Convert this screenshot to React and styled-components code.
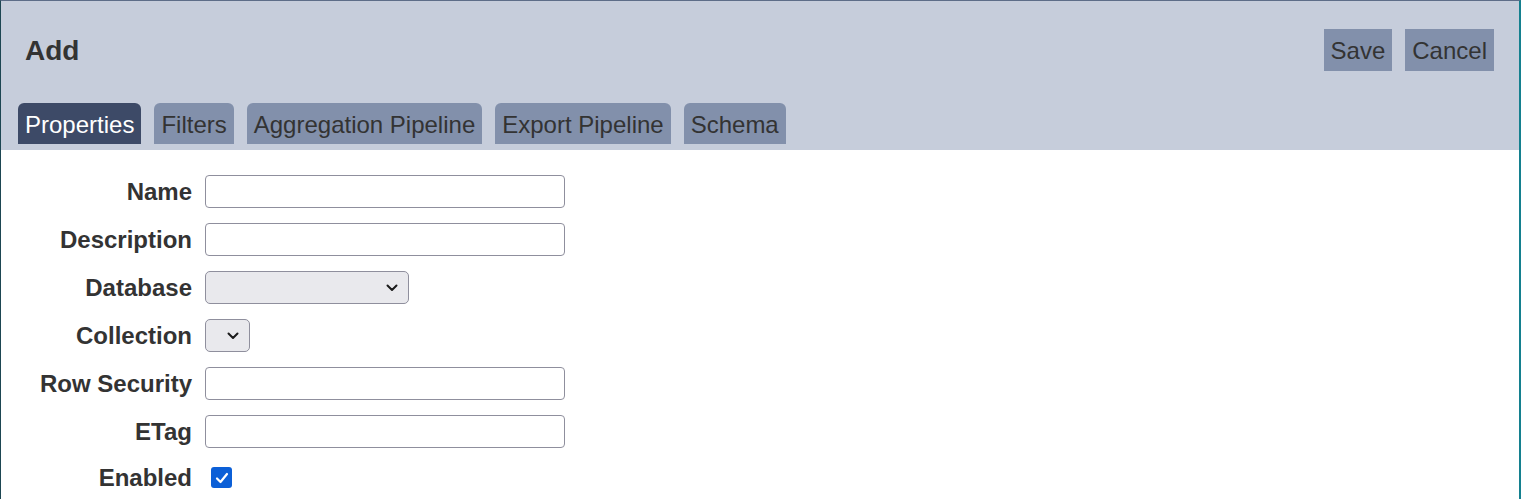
import React, { useState } from "react";
import styled, { createGlobalStyle } from "styled-components";

const GlobalStyle = createGlobalStyle`
  html, body {
    margin: 0;
    padding: 0;
    background: #ffffff;
  }
  body {
    font-family: "Liberation Sans", Arial, sans-serif;
    color: #333333;
  }
`;

const tabs = ["Properties", "Filters", "Aggregation Pipeline", "Export Pipeline", "Schema"];

const Window = styled.div`
  box-sizing: border-box;
  min-height: 100vh;
  border-top: 1px solid #5d6d88;
  border-left: 1px solid #1d4652;
  border-right: 2px solid #14808f;
  background: #ffffff;
`;

const Header = styled.div`
  background: #c6cddb;
  padding: 28px 25px 6px 17px;
`;

const TopRow = styled.div`
  display: flex;
  align-items: center;
  justify-content: space-between;
`;

const Title = styled.h1`
  margin: 0;
  padding: 2px 0 0 7px;
  font-size: 28px;
  font-weight: bold;
  color: #333333;
`;

const Actions = styled.div`
  display: flex;
  gap: 13px;
`;

const ActionButton = styled.button`
  font-family: inherit;
  font-size: 24px;
  line-height: 28px;
  color: #333333;
  background: #8290ab;
  border: none;
  border-radius: 0;
  padding: 8px 7px 6px;
  cursor: pointer;
`;

const TabBar = styled.div`
  display: flex;
  gap: 13px;
  margin-top: 32px;
`;

const Tab = styled.button`
  font-family: inherit;
  font-size: 24px;
  line-height: 28px;
  padding: 8px 7px 5px;
  border: none;
  border-radius: 6px 6px 0 0;
  background: ${(p) => (p.$active ? "#3d4a67" : "#8290ab")};
  color: ${(p) => (p.$active ? "#ffffff" : "#333333")};
  cursor: pointer;
`;

const Form = styled.div`
  display: grid;
  grid-template-columns: 191px auto;
  column-gap: 13px;
  row-gap: 15px;
  justify-content: start;
  align-items: center;
  padding-top: 25px;
`;

const Label = styled.label`
  text-align: right;
  font-size: 24px;
  font-weight: bold;
  color: #333333;
`;

const TextInput = styled.input`
  box-sizing: border-box;
  width: 360px;
  height: 33px;
  border: 1px solid #8f8f9d;
  border-radius: 4px;
  font-family: inherit;
  font-size: 20px;
  padding: 0 6px;
  background: #ffffff;
`;

const SelectWrap = styled.div`
  position: relative;
  width: ${(p) => p.$width}px;
  height: 33px;
`;

const Select = styled.select`
  box-sizing: border-box;
  width: 100%;
  height: 100%;
  appearance: none;
  -webkit-appearance: none;
  border: 1px solid #8f8f9d;
  border-radius: 5px;
  background: #e9e9ed;
  font-family: inherit;
  font-size: 20px;
  padding: 0 30px 0 6px;
`;

const Chevron = styled.svg`
  position: absolute;
  right: 11px;
  top: 13px;
  pointer-events: none;
`;

const CheckCell = styled.div`
  display: flex;
  align-items: center;
  padding-left: 6px;
  height: 29px;
`;

const CheckBox = styled.button`
  display: flex;
  align-items: center;
  justify-content: center;
  width: 21px;
  height: 21px;
  padding: 0;
  border: none;
  border-radius: 3px;
  background: ${(p) => (p.$checked ? "#0b5fd7" : "#ffffff")};
  box-shadow: ${(p) => (p.$checked ? "none" : "inset 0 0 0 1px #8f8f9d")};
  cursor: pointer;
`;

const ChevronIcon = () => (
  <Chevron width="12" height="8" viewBox="0 0 12 8">
    <path d="M1.5 1.5 L6 6 L10.5 1.5" fill="none" stroke="#1b1b1b" strokeWidth="2" strokeLinecap="round" strokeLinejoin="round" />
  </Chevron>
);

const Field = ({ label, children }) => (
  <>
    <Label>{label}</Label>
    <div>{children}</div>
  </>
);

export default function App() {
  const [active, setActive] = useState("Properties");
  const [enabled, setEnabled] = useState(true);

  return (
    <>
      <GlobalStyle />
      <Window>
        <Header>
          <TopRow>
            <Title>Add</Title>
            <Actions>
              <ActionButton>Save</ActionButton>
              <ActionButton>Cancel</ActionButton>
            </Actions>
          </TopRow>
          <TabBar>
            {tabs.map((t) => (
              <Tab key={t} $active={t === active} onClick={() => setActive(t)}>
                {t}
              </Tab>
            ))}
          </TabBar>
        </Header>
        <Form>
          <Field label="Name">
            <TextInput type="text" />
          </Field>
          <Field label="Description">
            <TextInput type="text" />
          </Field>
          <Field label="Database">
            <SelectWrap $width={204}>
              <Select defaultValue="">
                <option value=""></option>
              </Select>
              <ChevronIcon />
            </SelectWrap>
          </Field>
          <Field label="Collection">
            <SelectWrap $width={45}>
              <Select defaultValue="">
                <option value=""></option>
              </Select>
              <ChevronIcon />
            </SelectWrap>
          </Field>
          <Field label="Row Security">
            <TextInput type="text" />
          </Field>
          <Field label="ETag">
            <TextInput type="text" />
          </Field>
          <Label>Enabled</Label>
          <CheckCell>
            <CheckBox $checked={enabled} onClick={() => setEnabled(!enabled)}>
              {enabled && (
                <svg width="14" height="12" viewBox="0 0 14 12">
                  <path d="M2 6.5 L5.5 10 L12 2" fill="none" stroke="#ffffff" strokeWidth="2.2" strokeLinecap="round" strokeLinejoin="round" />
                </svg>
              )}
            </CheckBox>
          </CheckCell>
        </Form>
      </Window>
    </>
  );
}
